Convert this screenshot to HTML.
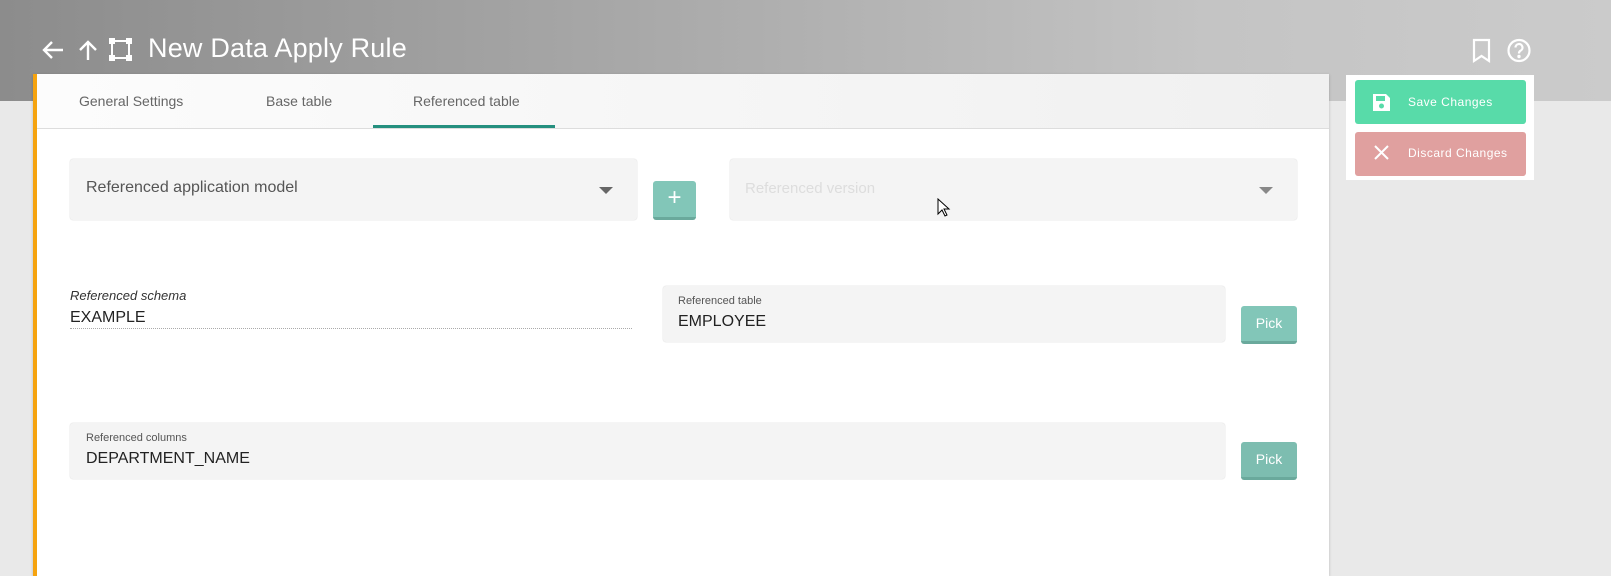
<!DOCTYPE html>
<html><head><meta charset="utf-8"><style>
*{box-sizing:border-box;margin:0;padding:0}
body{width:1611px;height:576px;overflow:hidden;font-family:"Liberation Sans",sans-serif;background:#e9e9e9;position:relative}
.hdr{position:absolute;left:0;top:0;width:1611px;height:101px;background:linear-gradient(90deg,#8c8c8c 0%,#a5a5a5 35%,#c4c4c4 75%,#cbcbcb 100%)}
.title{position:absolute;left:148px;top:33px;color:#fff;font-size:27px;letter-spacing:0.2px}
.card{position:absolute;left:33px;top:74px;width:1296px;height:502px;background:#fff;border-left:4px solid #f5a30f;box-shadow:0 1px 3px rgba(0,0,0,.2)}
.tabs{position:absolute;left:0;top:0;width:1292px;height:55px;background:linear-gradient(90deg,#fcfcfc,#f0f0f0);border-bottom:1px solid #ddd}
.tab{position:absolute;top:19px;font-size:14px;color:#666}
.ul{position:absolute;left:336px;top:51px;width:182px;height:3px;background:#25907f}
.fld{position:absolute;background:#f4f4f4;border-radius:3px;box-shadow:0 0 1px rgba(0,0,0,.25)}
.lbl{position:absolute;font-size:11px;color:#555}
.val{position:absolute;font-size:16px;color:#222}
.btn{position:absolute;background:#82c6b8;border-bottom:3px solid #6aa99c;border-radius:3px;color:#fff;text-align:center}
.caret{position:absolute;width:0;height:0;border-left:7px solid transparent;border-right:7px solid transparent;border-top:7px solid #666}
.panel{position:absolute;left:1346px;top:75px;width:188px;height:105px;background:#fff}
.pb{position:absolute;left:9px;width:171px;height:44px;border-radius:3px;color:#fff;font-size:12px;letter-spacing:.5px}
</style></head><body>
<div class="hdr"></div>
<svg style="position:absolute;left:40px;top:38px" width="100" height="26" viewBox="0 0 100 26" fill="none" stroke="#fff" stroke-width="2.4">
<path d="M23 12H5M12 4L4 12l8 8"/>
<path d="M48 22V4M40 12l8-8 8 8"/>
<rect x="72" y="3" width="17" height="17" stroke-width="2"/>
<g fill="#fff" stroke="none"><rect x="69" y="0" width="6" height="6"/><rect x="86" y="0" width="6" height="6"/><rect x="69" y="17" width="6" height="6"/><rect x="86" y="17" width="6" height="6"/></g>
</svg>
<div class="title">New Data Apply Rule</div>
<svg style="position:absolute;left:1470px;top:38px" width="70" height="26" viewBox="0 0 70 26" fill="none" stroke="#fff" stroke-width="2.2">
<path d="M4 2h15v21l-7.5-5L4 23z"/>
<circle cx="49" cy="12.5" r="10.5"/>
<path d="M45.5 9.5a3.5 3.5 0 1 1 5 3.2c-1.2.6-1.5 1.3-1.5 2.8"/>
<circle cx="49" cy="18.5" r=".6" fill="#fff"/>
</svg>
<div class="card">
<div class="tabs">
<div class="tab" style="left:42px">General Settings</div>
<div class="tab" style="left:229px">Base table</div>
<div class="tab" style="left:376px">Referenced table</div>
<div class="ul"></div>
</div>
<div class="fld" style="left:33px;top:85px;width:567px;height:61px"></div>
<div class="val" style="left:49px;top:105px;font-size:16px;color:#555">Referenced application model</div>
<div class="caret" style="left:562px;top:113px"></div>
<div class="btn" style="left:616px;top:107px;width:43px;height:39px;font-size:24px;line-height:34px">+</div>
<div class="fld" style="left:693px;top:85px;width:567px;height:61px"></div>
<div class="val" style="left:708px;top:106px;font-size:15px;color:#ddd">Referenced version</div>
<div class="caret" style="left:1222px;top:113px;border-top-color:#888"></div>
<div style="position:absolute;left:33px;top:214px;font-size:13px;font-style:italic;color:#333">Referenced schema</div>
<div class="val" style="left:33px;top:235px">EXAMPLE</div>
<div style="position:absolute;left:33px;top:254px;width:562px;border-bottom:1px dotted #aaa"></div>
<div class="fld" style="left:626px;top:212px;width:562px;height:56px"></div>
<div class="lbl" style="left:641px;top:221px">Referenced table</div>
<div class="val" style="left:641px;top:239px">EMPLOYEE</div>
<div class="btn" style="left:1204px;top:232px;width:56px;height:38px;font-size:14px;line-height:34px">Pick</div>
<div class="fld" style="left:33px;top:349px;width:1155px;height:56px"></div>
<div class="lbl" style="left:49px;top:358px">Referenced columns</div>
<div class="val" style="left:49px;top:376px">DEPARTMENT_NAME</div>
<div class="btn" style="left:1204px;top:368px;width:56px;height:38px;font-size:14px;line-height:34px;background:#7dbdb0">Pick</div>
</div>
<svg style="position:absolute;left:937px;top:198px" width="14" height="20" viewBox="0 0 14 20"><path d="M1 1v15l4-4 3 6 2-1-3-6h5z" fill="#fff" stroke="#000" stroke-width="1"/></svg>
<div class="panel">
<div class="pb" style="top:5px;background:#58dba9">
<svg style="position:absolute;left:17px;top:13px" width="19" height="19" viewBox="0 0 19 19"><path d="M1 1h13l4 4v13H1z" fill="#fff"/><rect x="4" y="3" width="9" height="5" fill="#58dba9"/><circle cx="9.5" cy="13" r="2.5" fill="#58dba9"/></svg>
<span style="position:absolute;left:53px;top:15px">Save Changes</span></div>
<div class="pb" style="top:57px;background:#e0a09f">
<svg style="position:absolute;left:19px;top:13px" width="15" height="15" viewBox="0 0 15 15" stroke="#fff" stroke-width="2"><path d="M1 1l13 13M14 1L1 14"/></svg>
<span style="position:absolute;left:53px;top:14px">Discard Changes</span></div>
</div>
</body></html>
